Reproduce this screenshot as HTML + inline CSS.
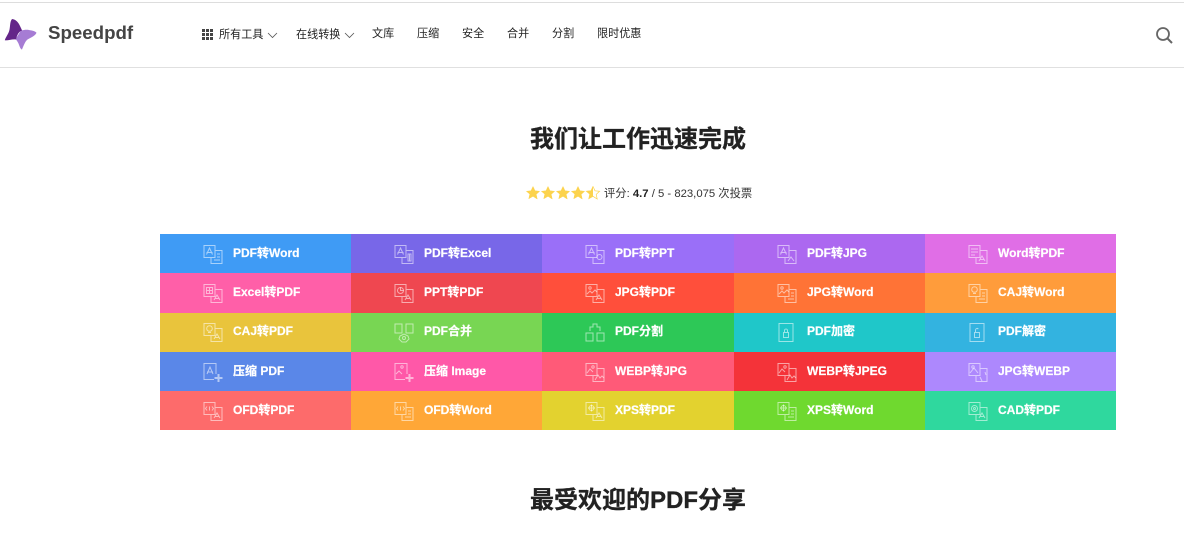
<!DOCTYPE html>
<html lang="zh-CN"><head><meta charset="utf-8"><title>Speedpdf</title>
<style>
*{box-sizing:border-box}
html,body{margin:0;padding:0;background:#fff;width:1184px;height:547px;overflow:hidden}
body{font-family:"Liberation Sans","Noto Sans CJK SC",sans-serif;color:#222;position:relative}
.a{position:absolute;white-space:nowrap}
.nav{top:26px;font-size:11.1px;line-height:16px;color:#222}
h1{position:absolute;left:0;width:1276px;text-align:center;margin:0;font-size:24px;line-height:32px;font-weight:700;color:#222;white-space:nowrap;-webkit-text-stroke:.3px #222}
.grid{position:absolute;left:160px;top:234px;width:956px;height:196px;display:grid;grid-template-columns:191px 191px 192px 191px 191px;grid-template-rows:39px 40px 39px 39px 39px}
.c{position:relative;color:#fff;font-size:12px;font-weight:700;line-height:38px;white-space:nowrap;-webkit-text-stroke:.2px #fff}
.c span{position:absolute;left:73px;top:0}
.c svg{position:absolute;left:43px;top:10px;width:20px;height:21px;fill:none;stroke:#fff;stroke-opacity:.55;stroke-width:1}
.r3 span{top:-1px}
.r3 svg{top:9px}
</style></head><body>
<svg width="0" height="0" style="position:absolute"><defs>
<path id="dd" d="M1 1.500h11v12H1zM8 13.500v6h11v-13h-7"/>
<symbol id="pw" viewBox="0 0 20 21"><use href="#dd"/><path d="M3.500 10.500 6.500 4l3 6.500M3.500 8.500h6M14 10h3M14 13h3M11 16h6"/></symbol>
<symbol id="px" viewBox="0 0 20 21"><use href="#dd"/><path d="M3.500 10.500 6.500 4l3 6.500M3.500 8.500h6M14 10h3v7h-3zM15.500 10v7"/></symbol>
<symbol id="pp" viewBox="0 0 20 21"><use href="#dd"/><path d="M3.500 10.500 6.500 4l3 6.500M3.500 8.500h6"/><circle cx="14.500" cy="13" r="2.500"/></symbol>
<symbol id="pj" viewBox="0 0 20 21"><use href="#dd"/><path d="M3.500 10.500 6.500 4l3 6.500M3.500 8.500h6M11 17l3-4 3 4"/></symbol>
<symbol id="wp" viewBox="0 0 20 21"><use href="#dd"/><path d="M3 5h7M3 8h7M3 11h4M11 17l3-5 3 5M12 15.500h4"/></symbol>
<symbol id="ep" viewBox="0 0 20 21"><use href="#dd"/><path d="M3.500 4.500h6v6h-6zM3.500 7.500h6M6.500 4.500v6M11 17l3-5 3 5M12 15.500h4"/></symbol>
<symbol id="tp" viewBox="0 0 20 21"><use href="#dd"/><circle cx="6.500" cy="7.500" r="3"/><path d="M6.500 4.500v3h3M11 17l3-5 3 5M12 15.500h4"/></symbol>
<symbol id="jp" viewBox="0 0 20 21"><use href="#dd"/><circle cx="5" cy="5" r="1.200"/><path d="M2 11l3-3 2 2 3-3 2 2M11 17l3-5 3 5M12 15.500h4"/></symbol>
<symbol id="jw" viewBox="0 0 20 21"><use href="#dd"/><circle cx="5" cy="5" r="1.200"/><path d="M2 11l3-3 2 2 3-3 2 2M14 10h3M14 13h3M11 16h6"/></symbol>
<symbol id="cp" viewBox="0 0 20 21"><use href="#dd"/><circle cx="6.500" cy="6.500" r="2.800"/><path d="M5 10.500h3M11 17l3-5 3 5M12 15.500h4"/></symbol>
<symbol id="cw" viewBox="0 0 20 21"><use href="#dd"/><circle cx="6.500" cy="6.500" r="2.800"/><path d="M5 10.500h3M14 10h3M14 13h3M11 16h6"/></symbol>
<symbol id="mg" viewBox="0 0 20 21"><path d="M1 2h7v9H1zM12 2h7v9h-7z"/><path d="M6 14l4-2 4 2 1 3-3 3H8l-3-3z"/><circle cx="10" cy="16" r="1.500"/></symbol>
<symbol id="sp" viewBox="0 0 20 21"><path d="M1 11h7v8H1zM12 11h7v8h-7z"/><path d="M5 9V5h3V2h4v3h3v4"/></symbol>
<symbol id="lk" viewBox="0 0 20 21"><path d="M2 1.500h14v18H2z"/><path d="M6.500 10.500h5v5h-5zM7.500 10.500V8a1.600 1.600 0 0 1 3 0v2.500"/></symbol>
<symbol id="ul" viewBox="0 0 20 21"><path d="M2 1.500h14v18H2z"/><path d="M6.500 10.500h5v5h-5zM7.500 10.500V8a1.600 1.600 0 0 1 2.800-1"/></symbol>
<symbol id="zp" viewBox="0 0 20 21"><path d="M13 12V1.500H1v16h10"/><path d="M4 12 7 5l3 7M4 10h6"/><path d="M15.500 12v8M11.500 16h8" stroke-width="2"/></symbol>
<symbol id="zi" viewBox="0 0 20 21"><path d="M13 12V1.500H1v16h10"/><circle cx="8" cy="5" r="1.200"/><path d="M2 12l3-3 3 3"/><path d="M15.500 12v8M11.500 16h8" stroke-width="2"/></symbol>
<symbol id="wj" viewBox="0 0 20 21"><use href="#dd"/><circle cx="8" cy="5" r="1.200"/><path d="M2 11l3-4 3 3M10 18l3-5 2 3 2-2 2 2"/></symbol>
<symbol id="jb" viewBox="0 0 20 21"><use href="#dd"/><circle cx="5" cy="5" r="1.200"/><path d="M2 11l4-5 4 5M12 15l2 4M17 10l1 3"/></symbol>
<symbol id="op" viewBox="0 0 20 21"><use href="#dd"/><path d="M4 5.500 2.500 7.500 4 9.500M9 5.500l1.500 2L9 9.500M6.500 5.500v4M11 17l3-5 3 5M12 15.500h4"/></symbol>
<symbol id="ow" viewBox="0 0 20 21"><use href="#dd"/><path d="M4 5.500 2.500 7.500 4 9.500M9 5.500l1.500 2L9 9.500M6.500 5.500v4M14 10h3M14 13h3M11 16h6"/></symbol>
<symbol id="xp" viewBox="0 0 20 21"><use href="#dd"/><circle cx="6.500" cy="7" r="2.500"/><path d="M6.500 3.500v7M3 7h7M11 17l3-5 3 5M12 15.500h4"/></symbol>
<symbol id="xw" viewBox="0 0 20 21"><use href="#dd"/><circle cx="6.500" cy="7" r="2.500"/><path d="M6.500 3.500v7M3 7h7M14 10h3M14 13h3M11 16h6"/></symbol>
<symbol id="ca" viewBox="0 0 20 21"><use href="#dd"/><circle cx="6.500" cy="7.500" r="3"/><circle cx="6.500" cy="7.500" r="1"/><path d="M11 17l3-5 3 5M12 15.500h4"/></symbol>
</defs></svg>

<div class="a" style="left:0;top:2px;width:1184px;height:1px;background:#ddd"></div>
<div class="a" style="left:0;top:67px;width:1184px;height:1px;background:#e0e0e0"></div>

<svg class="a" style="left:0;top:15px" width="40" height="38" viewBox="0 15 40 38">
<path fill="#a67cd4" d="M21 30.500 C24 30 26 29.500 29 30 C32 30.500 35 31 36.500 32.700 C35.500 35.500 31 37.500 27.500 39.500 C25 41.500 23.500 46 22 49.500 C20.500 49.500 19.500 46 18.500 43.500 C17.500 41.500 16.500 40 15.500 39 Z"/>
<path fill="#642589" d="M12 19 C15.500 19.300 18 22 19.500 25 C20.500 27 21.500 29 22 30.500 C19 31.500 17 34.500 16 39.500 C13 38.800 8.500 40.500 4.800 40.300 C5.500 37.500 8 34.500 9 31.500 C10.500 27.500 9.500 22 12 19 Z"/>
</svg>
<div class="a" style="left:48px;top:22px;font-size:18.7px;line-height:22px;font-weight:700;color:#444">Speedpdf</div>

<svg class="a" style="left:202px;top:29px" width="11" height="11" fill="#444"><path d="M0 0h3v3H0zM4 0h3v3H4zM8 0h3v3H8zM0 4h3v3H0zM4 4h3v3H4zM8 4h3v3H8zM0 8h3v3H0zM4 8h3v3H4zM8 8h3v3H8z"/></svg>
<div class="a nav" style="left:219px;top:27px">所有工具</div>
<svg class="a" style="left:267px;top:32px" width="11" height="7" fill="none" stroke="#555" stroke-width=".8"><path d="M1 1l4.500 4.500L10 1"/></svg>
<div class="a nav" style="left:296px;top:27px">在线转换</div>
<svg class="a" style="left:344px;top:32px" width="11" height="7" fill="none" stroke="#555" stroke-width=".8"><path d="M1 1l4.500 4.500L10 1"/></svg>
<div class="a nav" style="left:372px">文库</div>
<div class="a nav" style="left:417px">压缩</div>
<div class="a nav" style="left:462px">安全</div>
<div class="a nav" style="left:507px">合并</div>
<div class="a nav" style="left:552px">分割</div>
<div class="a nav" style="left:597px">限时优惠</div>

<svg class="a" style="left:1155px;top:26px" width="18" height="18" fill="none" stroke="#666"><circle cx="8" cy="8" r="6" stroke-width="1.800"/><path d="M12.500 12.500 17 17" stroke-width="2"/></svg>

<h1 style="top:124px">我们让工作迅速完成</h1>

<svg class="a" style="left:526px;top:186px" width="76" height="14" viewBox="0 0 76 14">
<defs><path id="st" d="M7 .5l2 4.300 4.600.5-3.400 3.100 1 4.600L7 10.300l-4.200 2.400 1-4.600L.4 5.300 5 4.800z"/></defs>
<g fill="#fcd34d" stroke="#fcd34d" stroke-width=".5" stroke-linejoin="round"><use href="#st"/><use href="#st" x="15"/><use href="#st" x="30"/><use href="#st" x="45"/></g>
<path fill="#fcd34d" d="M67 .5v9.800l-4.200 2.400 1-4.600-3.400-3.100 4.600-.5z"/>
<use href="#st" x="60" fill="none" stroke="#fcd34d" stroke-width=".7"/>
</svg>
<div class="a" style="left:604px;top:187px;font-size:11.3px;line-height:14px;color:#333">评分: <b style="color:#222">4.7</b> / 5 - 823,075 次投票</div>

<div class="grid">
<div class="c" style="background:#3f9bf5"><svg><use href="#pw"/></svg><span>PDF转Word</span></div>
<div class="c" style="background:#7867e8"><svg><use href="#px"/></svg><span>PDF转Excel</span></div>
<div class="c" style="background:#9a6ff8"><svg><use href="#pp"/></svg><span>PDF转PPT</span></div>
<div class="c" style="background:#ac68f0"><svg><use href="#pj"/></svg><span>PDF转JPG</span></div>
<div class="c" style="background:#e06ee6"><svg><use href="#wp"/></svg><span>Word转PDF</span></div>

<div class="c" style="background:#ff5fa8"><svg><use href="#ep"/></svg><span>Excel转PDF</span></div>
<div class="c" style="background:#ef4750"><svg><use href="#tp"/></svg><span>PPT转PDF</span></div>
<div class="c" style="background:#ff4f3b"><svg><use href="#jp"/></svg><span>JPG转PDF</span></div>
<div class="c" style="background:#ff7336"><svg><use href="#jw"/></svg><span>JPG转Word</span></div>
<div class="c" style="background:#ff9c3b"><svg><use href="#cw"/></svg><span>CAJ转Word</span></div>

<div class="c r3" style="background:#e9c43c"><svg><use href="#cp"/></svg><span>CAJ转PDF</span></div>
<div class="c r3" style="background:#78d653"><svg><use href="#mg"/></svg><span>PDF合并</span></div>
<div class="c r3" style="background:#2dc857"><svg><use href="#sp"/></svg><span>PDF分割</span></div>
<div class="c r3" style="background:#1fc7c9"><svg><use href="#lk"/></svg><span>PDF加密</span></div>
<div class="c r3" style="background:#33b3e0"><svg><use href="#ul"/></svg><span>PDF解密</span></div>

<div class="c" style="background:#5a87e8"><svg><use href="#zp"/></svg><span>压缩 PDF</span></div>
<div class="c" style="background:#ff58a8"><svg><use href="#zi"/></svg><span>压缩 Image</span></div>
<div class="c" style="background:#ff5a78"><svg><use href="#wj"/></svg><span>WEBP转JPG</span></div>
<div class="c" style="background:#f43339"><svg><use href="#wj"/></svg><span>WEBP转JPEG</span></div>
<div class="c" style="background:#ad88fd"><svg><use href="#jb"/></svg><span>JPG转WEBP</span></div>

<div class="c" style="background:#fd6b6b"><svg><use href="#op"/></svg><span>OFD转PDF</span></div>
<div class="c" style="background:#ffa737"><svg><use href="#ow"/></svg><span>OFD转Word</span></div>
<div class="c" style="background:#e3d22f"><svg><use href="#xp"/></svg><span>XPS转PDF</span></div>
<div class="c" style="background:#6fd92f"><svg><use href="#xw"/></svg><span>XPS转Word</span></div>
<div class="c" style="background:#2fd89e"><svg><use href="#ca"/></svg><span>CAD转PDF</span></div>
</div>

<h1 style="top:485px">最受欢迎的PDF分享</h1>
</body></html>
